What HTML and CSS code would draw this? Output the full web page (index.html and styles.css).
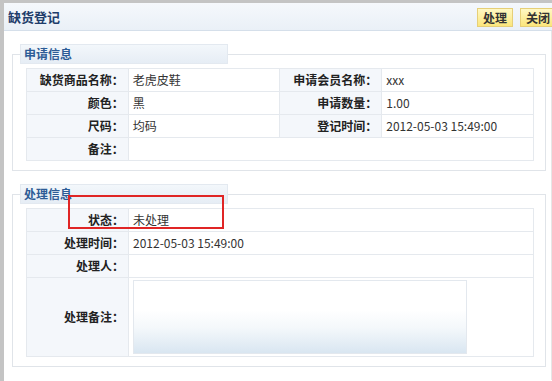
FILE: index.html
```html
<!DOCTYPE html>
<html lang="zh-CN">
<head>
    <meta charset="UTF-8">
    <title>缺货登记</title>
    <link rel="stylesheet" href="styles.css">
</head>
<body>
    <div class="frame">
        <div class="header">
            <span class="title">缺货登记</span>
            <div class="tools">
                <button class="btn">处理</button>
                <button class="btn">关闭</button>
            </div>
        </div>
        <div class="content">
            <fieldset class="box">
                <legend>申请信息</legend>
                <table class="form four">
                    <tr>
                        <th>缺货商品名称：</th><td>老虎皮鞋</td>
                        <th>申请会员名称：</th><td>xxx</td>
                    </tr>
                    <tr>
                        <th>颜色：</th><td>黑</td>
                        <th>申请数量：</th><td>1.00</td>
                    </tr>
                    <tr>
                        <th>尺码：</th><td>均码</td>
                        <th>登记时间：</th><td>2012-05-03 15:49:00</td>
                    </tr>
                    <tr>
                        <th>备注：</th><td colspan="3"></td>
                    </tr>
                </table>
            </fieldset>

            <fieldset class="box">
                <legend>处理信息</legend>
                <table class="form two">
                    <tr><th>状态：</th><td>未处理</td></tr>
                    <tr><th>处理时间：</th><td>2012-05-03 15:49:00</td></tr>
                    <tr><th>处理人：</th><td></td></tr>
                    <tr class="tall"><th>处理备注：</th><td><textarea class="note"></textarea></td></tr>
                </table>
            </fieldset>

            <div class="mark"></div>
        </div>
    </div>
</body>
</html>
```

FILE: styles.css
```css
body {
    margin: 0;
    font-family: "Noto Sans CJK SC", "DejaVu Sans", sans-serif;
    font-size: 12px;
    color: #333;
    background: #fff;
    overflow: hidden;
}
.frame {
    width: 548px;
    height: 378px;
    border-left: 4px solid #c4c4c4;
    border-top: 3px solid #c4c4c4;
}
.header {
    height: 27px;
    display: flex;
    align-items: center;
    justify-content: space-between;
    padding-left: 4px;
    background: linear-gradient(#f5f8fc, #eaf0f7);
    border-bottom: 1px solid #d5dfea;
}
.title {
    font-size: 13px;
    font-weight: bold;
    color: #1f3d6b;
}
.tools {
    display: flex;
    gap: 7px;
    margin-right: -4px;
    margin-top: 2px;
}
.btn {
    width: 36px;
    height: 19px;
    padding: 0;
    font-family: inherit;
    font-size: 12px;
    font-weight: bold;
    color: #333;
    border: 1px solid #e6cf78;
    background: linear-gradient(#fff8c4, #fbe67c);
}
.content {
    position: relative;
    padding: 13px 0 0 8px;
    border-right: 1px solid #e6e6e6;
    height: 336px;
}
.box {
    width: 509px;
    margin: 0 0 13px 0;
    padding: 0 10px 9px 13px;
    border: 1px solid #e0e4e9;
}
.box legend {
    box-sizing: border-box;
    width: 208px;
    height: 20px;
    line-height: 18px;
    margin-left: -6px;
    padding: 0 0 0 3px;
    font-weight: bold;
    color: #2d5c96;
    border: 1px solid #e3e9f0;
    background: linear-gradient(#f3f7fb, #e6edf5);
}
.form {
    width: 508px;
    margin-top: 4px;
    border-collapse: collapse;
    border: 1px solid #e5e9ee;
}
.form th, .form td {
    height: 22px;
    line-height: 16px;
    padding: 0;
    border: 1px solid #e5e9ee;
}
.form th {
    width: 97px;
    padding-right: 4px;
    text-align: right;
    color: #222;
    background: #f4f7fb;
}
.form td {
    padding-left: 4px;
    text-align: left;
    background: #fff;
}
.four td {
    width: 147px;
}
.tall th, .tall td {
    height: 78px;
}
.note {
    display: block;
    width: 332px;
    height: 72px;
    margin: 0;
    padding: 0;
    resize: none;
    border: 1px solid #e3e8ee;
    background: linear-gradient(#fff 40%, #f4f8fb 65%, #d9e6f1);
}
.mark {
    position: absolute;
    left: 64px;
    top: 164px;
    width: 152px;
    height: 30px;
    border: 2px solid #e02525;
}
```
